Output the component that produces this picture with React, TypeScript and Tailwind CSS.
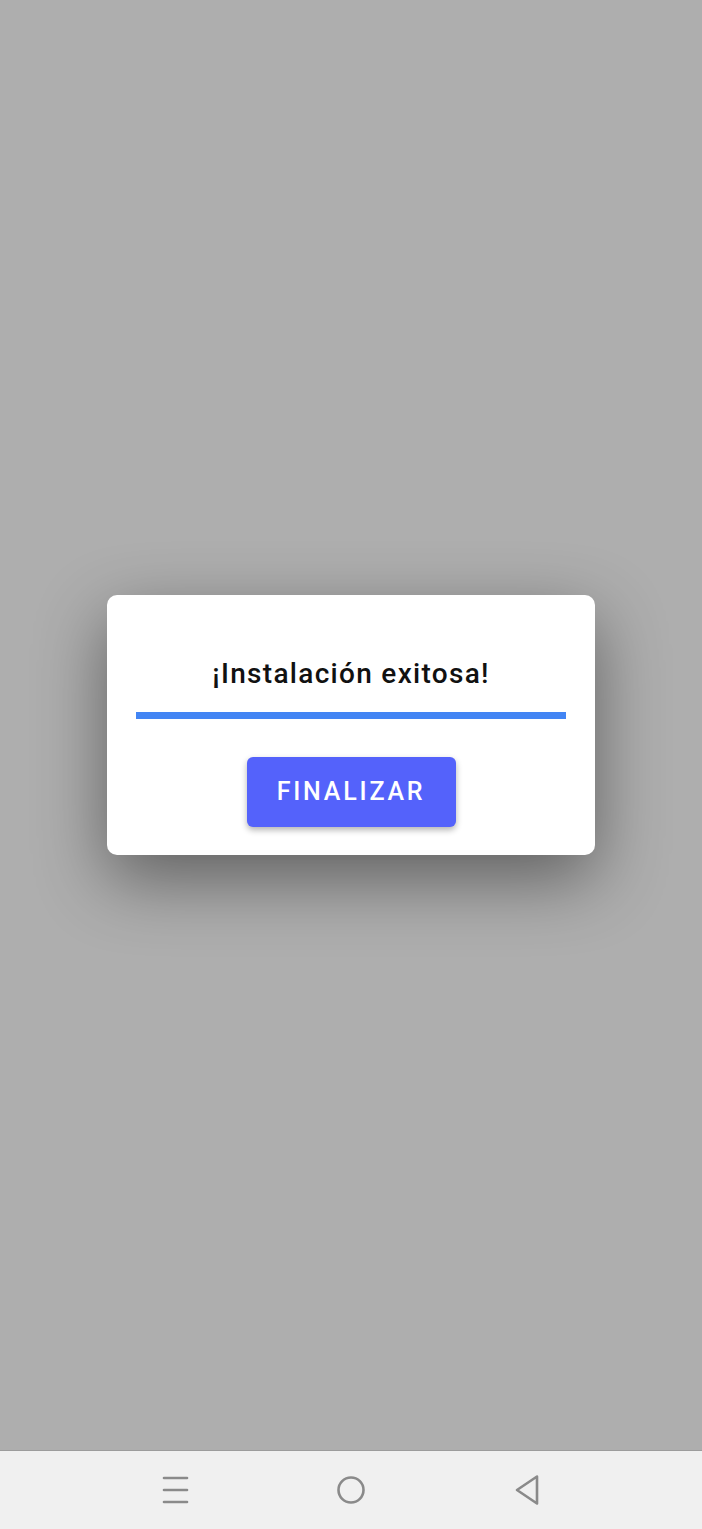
export default function App() {
  return (
    <div className="flex h-[1529px] w-full flex-col bg-[#aeaeae] font-['Roboto',sans-serif]">
      {/* Dimmed screen with dialog */}
      <div className="flex flex-1 items-center justify-center">
        <div className="w-[488px] rounded-[10px] bg-white px-[29px] pb-[28px] pt-[62px] shadow-[0_24px_70px_rgba(0,0,0,0.45)]">
          <h2 className="text-center text-[28px] font-medium leading-[34px] tracking-[1.3px] text-[#111]">
            ¡Instalación exitosa!
          </h2>
          <div className="mt-[21px] h-[7px] w-full bg-[#4285f4]" />
          <div className="mt-[38px] flex justify-center">
            <button
              type="button"
              className="h-[70px] w-[209px] rounded-[6px] bg-[#5462fb] text-[25px] font-medium tracking-[2.8px] text-white shadow-[0_3px_6px_rgba(0,0,0,0.3)]"
            >
              FINALIZAR
            </button>
          </div>
        </div>
      </div>

      {/* Android nav bar */}
      <div className="flex h-[79px] items-center justify-between border-t border-[#9c9c9c] bg-[#f0f0f0] px-[155px]">
        <div className="flex w-[40px] justify-center">
          <svg width="27" height="28" viewBox="0 0 27 28" className="text-[#8a8a8a]">
            <g stroke="currentColor" strokeWidth="2.6" strokeLinecap="round">
              <line x1="2" y1="2" x2="25" y2="2" />
              <line x1="2" y1="14" x2="25" y2="14" />
              <line x1="2" y1="26" x2="25" y2="26" />
            </g>
          </svg>
        </div>
        <div className="flex w-[40px] justify-center">
          <svg width="30" height="30" viewBox="0 0 30 30" className="text-[#8a8a8a]">
            <circle cx="15" cy="15" r="12.5" fill="none" stroke="currentColor" strokeWidth="2.6" />
          </svg>
        </div>
        <div className="flex w-[40px] justify-center">
          <svg width="26" height="32" viewBox="0 0 26 32" className="text-[#8a8a8a]">
            <path d="M23 2.5 L3 16 L23 29.5 Z" fill="none" stroke="currentColor" strokeWidth="2.6" strokeLinejoin="round" />
          </svg>
        </div>
      </div>
    </div>
  );
}
